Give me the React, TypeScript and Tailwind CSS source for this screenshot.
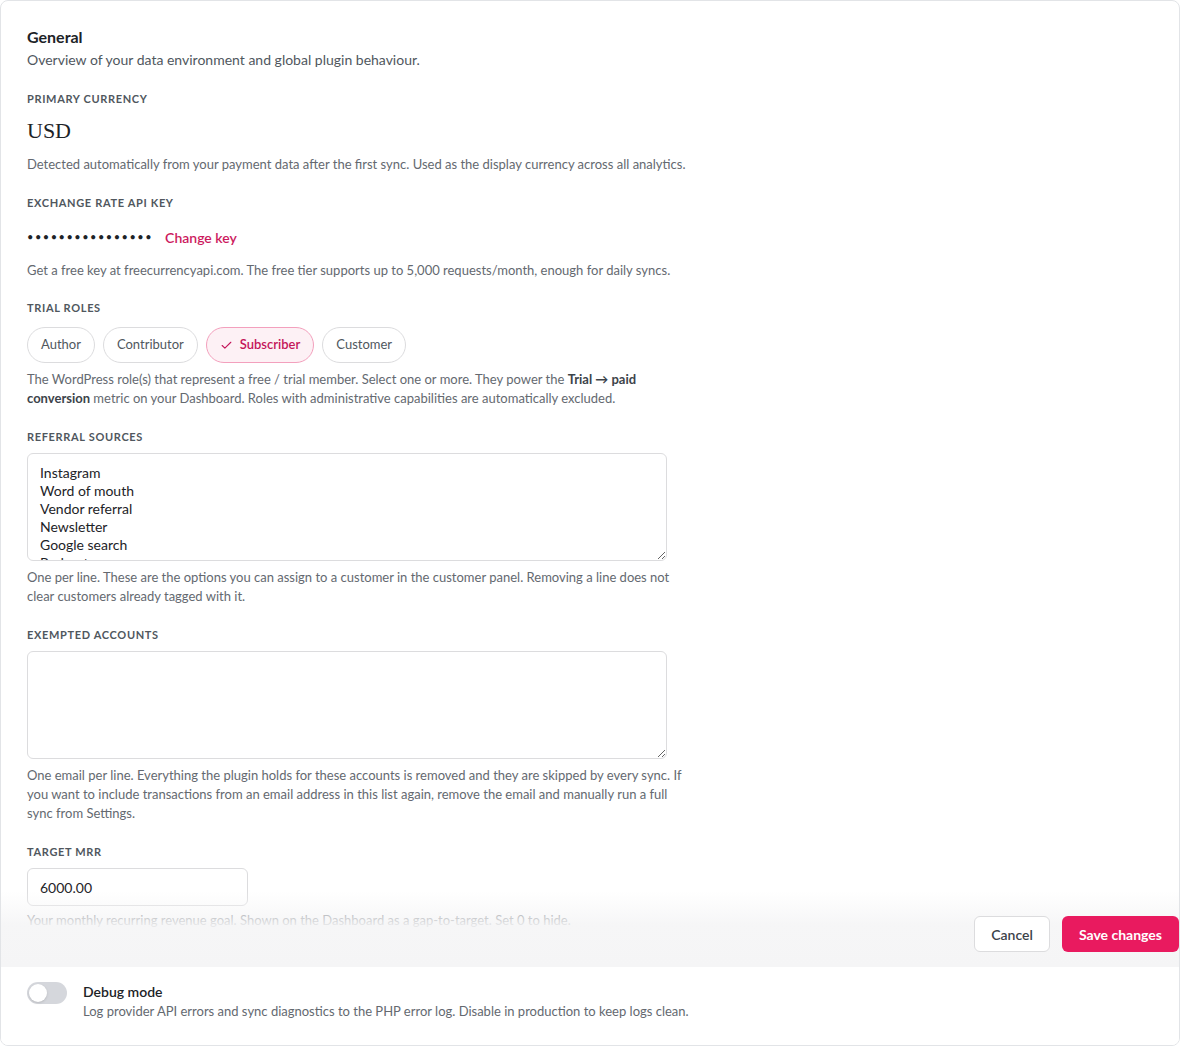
import { Check } from "lucide-react";

const font = { fontFamily: 'Lato, "Noto Sans", Arial, sans-serif' };

function Label({ children, className = "" }: { children: React.ReactNode; className?: string }) {
  return (
    <div className={`text-[11px] leading-4 font-bold uppercase tracking-[0.06em] text-[#50575e] ${className}`}>
      {children}
    </div>
  );
}

function Help({ children, className = "" }: { children: React.ReactNode; className?: string }) {
  return <p className={`max-w-[665px] text-[13px] leading-[19px] text-[#646970] ${className}`}>{children}</p>;
}

const roles = [
  { name: "Author", on: false },
  { name: "Contributor", on: false },
  { name: "Subscriber", on: true },
  { name: "Customer", on: false },
];

const referral = "Instagram\nWord of mouth\nVendor referral\nNewsletter\nGoogle search\nPodcast\nOther";

export default function App() {
  return (
    <div className="h-[1046px] w-[1180px] bg-white" style={font}>
      <div className="flex h-full flex-col overflow-hidden rounded-lg border border-[#e2e4e7] bg-white">
        {/* Scrollable settings body */}
        <div className="relative flex-1 overflow-hidden">
          <div className="pl-[26px] pt-[25px]">
            <h2 className="text-[16px] leading-[22px] font-bold text-[#1d2327]">General</h2>
            <p className="mt-[2px] text-[14px] leading-5 text-[#50575e]">
              Overview of your data environment and global plugin behaviour.
            </p>

            <Label className="mt-[21px]">Primary currency</Label>
            <div
              className="mt-[10px] text-[22px] leading-[28px] text-[#1d2327]"
              style={{ fontFamily: '"Liberation Serif", "DejaVu Serif", serif' }}
            >
              USD
            </div>
            <Help className="mt-[10px]">
              Detected automatically from your payment data after the first sync. Used as the display currency across
              all analytics.
            </Help>

            <Label className="mt-[21px]">Exchange rate API key</Label>
            <div className="mt-[16px] flex h-5 items-center gap-[12px]">
              <span className="text-[11px] tracking-[1.5px] text-[#1d2327]">••••••••••••••••</span>
              <button className="text-[14px] font-semibold text-[#cc1a5e]">Change key</button>
            </div>
            <Help className="mt-[14px]">
              Get a free key at freecurrencyapi.com. The free tier supports up to 5,000 requests/month, enough for daily
              syncs.
            </Help>

            <Label className="mt-[20px]">Trial roles</Label>
            <div className="mt-[11px] flex gap-2">
              {roles.map((r) =>
                r.on ? (
                  <span
                    key={r.name}
                    className="flex h-9 items-center gap-[7px] rounded-full border border-[#f3a0bd] bg-[#fdf1f5] px-[13px] text-[13px] font-semibold text-[#c4165a]"
                  >
                    <Check size={13} strokeWidth={2} />
                    {r.name}
                  </span>
                ) : (
                  <span
                    key={r.name}
                    className="flex h-9 items-center rounded-full border border-[#dcdcde] bg-white px-[13px] text-[13px] text-[#50575e]"
                  >
                    {r.name}
                  </span>
                )
              )}
            </div>
            <Help className="mt-[7px]">
              The WordPress role(s) that represent a free / trial member. Select one or more. They power the{" "}
              <b className="font-bold text-[#3c434a]">Trial → paid</b>{" "}
              <b className="font-bold text-[#3c434a]">conversion</b> metric on your Dashboard. Roles with
              administrative capabilities are automatically excluded.
            </Help>

            <Label className="mt-[21px]">Referral sources</Label>
            <textarea
              readOnly
              value={referral}
              className="mt-2 block h-[108px] w-[640px] resize-y rounded-md border border-[#dcdcde] px-3 py-[10px] text-[14px] leading-[18px] text-[#1d2327] outline-none"
              style={font}
            />
            <Help className="mt-[7px]">
              One per line. These are the options you can assign to a customer in the customer panel. Removing a line
              does not clear customers already tagged with it.
            </Help>

            <Label className="mt-[21px]">Exempted accounts</Label>
            <textarea
              readOnly
              value=""
              className="mt-2 block h-[108px] w-[640px] resize-y rounded-md border border-[#dcdcde] px-3 py-[10px] text-[14px] leading-[18px] text-[#1d2327] outline-none"
              style={font}
            />
            <Help className="mt-[7px]">
              One email per line. Everything the plugin holds for these accounts is removed and they are skipped by
              every sync. If you want to include transactions from an email address in this list again, remove the
              email and manually run a full sync from Settings.
            </Help>

            <Label className="mt-[21px]">Target MRR</Label>
            <input
              readOnly
              value="6000.00"
              className="mt-2 block h-[38px] w-[221px] rounded-md border border-[#dcdcde] px-3 text-[14px] text-[#1d2327] outline-none"
              style={font}
            />
            <Help className="mt-[5px]">
              Your monthly recurring revenue goal. Shown on the Dashboard as a gap-to-target. Set 0 to hide.
            </Help>
          </div>

          {/* Sticky action bar */}
          <div className="absolute inset-x-0 bottom-0 flex h-[76px] items-end justify-end gap-3 bg-gradient-to-b from-white/0 via-[#f5f5f6]/90 via-45% to-[#f5f5f6] pb-[15px] pr-0">
            <button className="h-9 rounded-md border border-[#dcdcde] bg-white px-4 text-[14px] font-semibold text-[#3c434a]">
              Cancel
            </button>
            <button className="h-9 rounded-md bg-[#e91a5f] px-[17px] text-[14px] font-bold text-white">
              Save changes
            </button>
          </div>
        </div>

        {/* Debug toggle */}
        <div className="flex h-[78px] shrink-0 gap-4 bg-white pl-[26px] pt-[15px]">
          <div className="flex h-[22px] w-10 items-center rounded-full bg-[#d5d7dc] px-[2px]">
            <span className="h-[18px] w-[18px] rounded-full bg-white shadow-sm" />
          </div>
          <div>
            <div className="text-[14px] leading-5 font-semibold text-[#1d2327]">Debug mode</div>
            <p className="text-[13px] leading-[19px] text-[#646970]">
              Log provider API errors and sync diagnostics to the PHP error log. Disable in production to keep logs
              clean.
            </p>
          </div>
        </div>
      </div>
    </div>
  );
}
